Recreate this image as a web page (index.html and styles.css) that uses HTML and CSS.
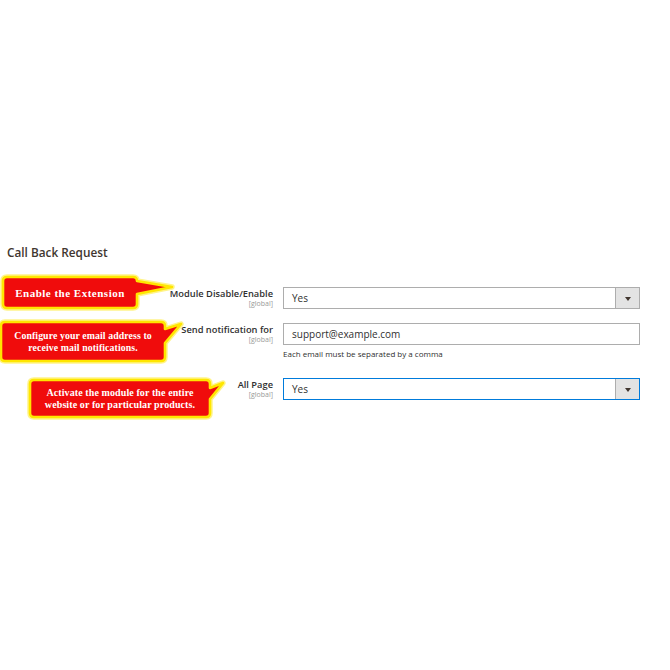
FILE: index.html
```html
<!DOCTYPE html>
<html>
<head>
<meta charset="utf-8">
<link rel="stylesheet" href="styles.css">
</head>
<body>
<div class="page">
  <h2 class="title">Call Back Request</h2>
  <div class="rows">
    <div class="row">
      <div class="label"><span class="name">Module Disable/Enable</span><span class="scope">[global]</span></div>
      <div class="control">
        <div class="select"><span class="val">Yes</span><span class="btn"><span class="tri"></span></span></div>
      </div>
    </div>
    <div class="row">
      <div class="label"><span class="name">Send notification for</span><span class="scope">[global]</span></div>
      <div class="control">
        <div class="input">support@example.com</div>
        <div class="help">Each email must be separated by a comma</div>
      </div>
    </div>
    <div class="row row3">
      <div class="label"><span class="name">All Page</span><span class="scope">[global]</span></div>
      <div class="control">
        <div class="select focus"><span class="val">Yes</span><span class="btn"><span class="tri"></span></span></div>
      </div>
    </div>
  </div>
</div>

<div class="callout c1">
  <svg class="shape" width="176" height="38" viewBox="0 0 176 38"><path class="glow" d="M7,3 H133 Q137,3 137,7 L172,13 L137,20 V30 Q137,34 133,34 H7 Q3,34 3,30 V7 Q3,3 7,3 Z"/><path class="body" d="M7,3 H133 Q137,3 137,7 L172,13 L137,20 V30 Q137,34 133,34 H7 Q3,34 3,30 V7 Q3,3 7,3 Z"/></svg>
  <div class="text t1">Enable the Extension</div>
</div>
<div class="callout c2">
  <svg class="shape" width="184" height="48" viewBox="0 0 184 48"><path class="glow" d="M5,4 H161 Q165,4 165,8 V11 L181,6 L165,25 V39 Q165,43 161,43 H5 Q1,43 1,39 V8 Q1,4 5,4 Z"/><path class="body" d="M5,4 H161 Q165,4 165,8 V11 L181,6 L165,25 V39 Q165,43 161,43 H5 Q1,43 1,39 V8 Q1,4 5,4 Z"/></svg>
  <div class="text t2">Configure your email address to<br>receive mail notifications.</div>
</div>
<div class="callout c3">
  <svg class="shape" width="200" height="46" viewBox="0 0 200 46"><path class="glow" d="M8,4 H180 Q184,4 184,8 V12 L197,7 L184,23 V37 Q184,41 180,41 H8 Q4,41 4,37 V8 Q4,4 8,4 Z"/><path class="body" d="M8,4 H180 Q184,4 184,8 V12 L197,7 L184,23 V37 Q184,41 180,41 H8 Q4,41 4,37 V8 Q4,4 8,4 Z"/></svg>
  <div class="text t3">Activate the module for the entire<br>website or for particular products.</div>
</div>
</body>
</html>
```

FILE: styles.css
```css
html, body {
  margin: 0;
  padding: 0;
  background: #ffffff;
}
body {
  width: 670px;
  height: 670px;
  position: relative;
  overflow: hidden;
  font-family: "Open Sans", "Noto Sans", sans-serif;
  color: #303030;
}
.page {
  padding: 244px 30px 0 7px;
}
.title {
  margin: 0;
  font-size: 11.8px;
  line-height: 16px;
  font-weight: 600;
  color: #41362f;
}
.rows {
  margin-top: 27px;
  display: flex;
  flex-direction: column;
  gap: 14px;
}
.row {
  display: grid;
  grid-template-columns: 266px 357px;
  column-gap: 10px;
}
.row3 {
  margin-top: 5px;
}
.label {
  display: flex;
  flex-direction: column;
  align-items: flex-end;
  padding-top: 1px;
}
.name {
  font-size: 9.3px;
  line-height: 12px;
  font-weight: 600;
  color: #303030;
}
.scope {
  font-size: 7px;
  line-height: 8px;
  color: #999999;
}
.control {
  display: flex;
  flex-direction: column;
}
.select, .input {
  box-sizing: border-box;
  height: 22px;
  border: 1px solid #adadad;
  background: #fff;
  font-size: 10px;
  color: #303030;
  display: flex;
  align-items: center;
}
.select.focus {
  border-color: #007bdb;
}
.val, .input {
  padding-left: 8px;
}
.val {
  flex: 1;
}
.btn {
  width: 23px;
  height: 20px;
  background: #e3e3e3;
  border-left: 1px solid #adadad;
  display: flex;
  align-items: center;
  justify-content: center;
}
.tri {
  width: 0;
  height: 0;
  border-left: 3px solid transparent;
  border-right: 3px solid transparent;
  border-top: 4px solid #41362f;
  margin-top: 1px;
}
.help {
  margin-top: 4px;
  font-size: 8px;
  line-height: 10px;
  color: #303030;
}
.callout {
  position: absolute;
}
.c1 { left: 0; top: 274px; width: 176px; height: 38px; }
.c2 { left: 0; top: 318px; width: 184px; height: 48px; }
.c3 { left: 26px; top: 376px; width: 200px; height: 46px; }
.shape {
  position: absolute;
  left: 0;
  top: 0;
  overflow: visible;
}
.glow {
  fill: none;
  stroke: #fff48a;
  stroke-width: 5.5;
  stroke-linejoin: round;
}
.body {
  fill: #f00c0c;
  stroke: #ffe600;
  stroke-width: 2.6;
  stroke-linejoin: round;
}
.text {
  position: absolute;
  display: flex;
  align-items: center;
  justify-content: center;
  text-align: center;
  color: #ffffff;
  font-family: "Liberation Serif", "Times New Roman", serif;
  font-weight: bold;
}
.t1 {
  left: 3px; top: 3px; width: 134px; height: 31px;
  font-size: 11px;
  letter-spacing: 0.5px;
}
.t2 {
  left: 1px; top: 4px; width: 164px; height: 39px;
  font-size: 9.8px;
  letter-spacing: 0.1px;
  line-height: 12px;
}
.t3 {
  left: 4px; top: 4px; width: 180px; height: 37px;
  font-size: 10px;
  letter-spacing: 0.1px;
  line-height: 12px;
}
```
